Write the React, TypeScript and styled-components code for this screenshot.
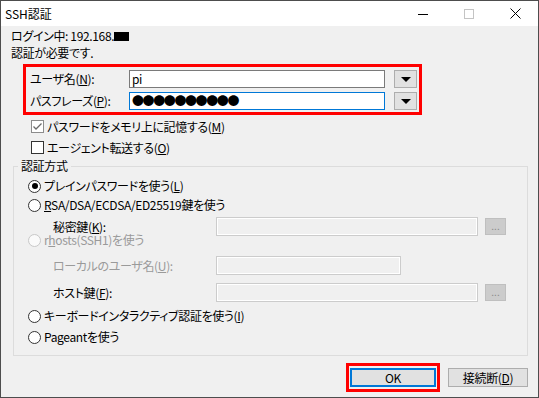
import React from "react";
import styled, { createGlobalStyle } from "styled-components";

const Global = createGlobalStyle`
  html, body { margin: 0; padding: 0; background: #f0f0f0; }
  body {
    font-family: "Noto Sans CJK JP", "Noto Sans", sans-serif;
    font-size: 12px;
    color: #000;
    font-feature-settings: "palt";
    text-autospace: no-autospace;
    text-spacing-trim: space-all;
    letter-spacing: -0.35px;
  }
  * { box-sizing: border-box; }
`;

const Win = styled.div`
  width: 539px;
  height: 398px;
  border: 1px solid #4d4d4d;
  background: #f0f0f0;
  display: flex;
  flex-direction: column;
  overflow: hidden;
`;

const TitleBar = styled.div`
  height: 25px;
  flex: none;
  background: #fff;
  display: flex;
  align-items: center;
`;

const Title = styled.div`
  flex: 1;
  padding-left: 4px;
  font-size: 12px;
  line-height: 25px;
  letter-spacing: 0;
`;

const Caption = styled.div`
  width: 46px;
  height: 25px;
  display: flex;
  align-items: center;
  justify-content: center;
`;

const Body = styled.div`
  flex: 1;
  display: flex;
  flex-direction: column;
  padding: 0 10px;
`;

const Line = styled.div<{ $mt: number }>`
  margin-top: ${(p) => p.$mt}px;
  height: 14px;
  line-height: 14px;
  white-space: nowrap;
`;

const Masked = styled.span`
  display: inline-block;
  width: 15px;
  height: 9px;
  background: #000;
`;

const Highlight = styled.div`
  margin: 4px 0 0 12px;
  width: 399px;
  border: 3px solid #ff0000;
  padding: 3px 2px 2px 4px;
  display: flex;
  flex-direction: column;
  gap: 4px;
`;

const FieldRow = styled.div`
  height: 18px;
  display: flex;
  align-items: center;
`;

const FieldLabel = styled.div`
  width: 99px;
  white-space: nowrap;
  line-height: 14px;
`;

const TextBox = styled.div<{ $focused?: boolean }>`
  width: 256px;
  height: 18px;
  background: #fff;
  border: 1px solid ${(p) => (p.$focused ? "#0078d7" : "#7a7a7a")};
  padding-left: 2px;
  display: flex;
  align-items: center;
  line-height: 14px;
  white-space: nowrap;
  overflow: hidden;
`;

const Dots = styled.span`
  font-size: 12px;
  letter-spacing: -1.4px;
  font-feature-settings: normal;
`;

const DropButton = styled.div`
  margin-left: 9px;
  width: 23px;
  height: 18px;
  background: #e1e1e1;
  border: 1px solid #adadad;
  display: flex;
  align-items: center;
  justify-content: center;
`;

const CheckRow = styled.div<{ $mt: number }>`
  margin: ${(p) => p.$mt}px 0 0 20px;
  height: 13px;
  display: flex;
  align-items: center;
  gap: 3px;
  white-space: nowrap;
  line-height: 14px;
`;

const Box = styled.span<{ $checked?: boolean }>`
  width: 13px;
  height: 13px;
  flex: none;
  background: #fff;
  border: 1px solid ${(p) => (p.$checked ? "#8c8c8c" : "#333")};
  display: flex;
  align-items: center;
  justify-content: center;
`;

const Group = styled.fieldset`
  margin: 5px 0 0 2px;
  width: 515px;
  height: 197px;
  border: 1px solid #dcdcdc;
  padding: 0;
  min-width: 0;
  display: flex;
  flex-direction: column;
`;

const Legend = styled.legend`
  margin-left: 4px;
  padding: 0 3px;
  line-height: 14px;
  font-size: 12px;
`;

const Option = styled.div<{ $mt: number; $disabled?: boolean }>`
  margin: ${(p) => p.$mt}px 0 0 14px;
  height: 14px;
  display: flex;
  align-items: center;
  gap: 3px;
  white-space: nowrap;
  line-height: 14px;
  color: ${(p) => (p.$disabled ? "#9a9a9a" : "#000")};
`;

const Radio = styled.span<{ $selected?: boolean; $disabled?: boolean }>`
  width: 13px;
  height: 13px;
  flex: none;
  border-radius: 50%;
  background: ${(p) => (p.$disabled ? "#fafafa" : "#fff")};
  border: 1px solid ${(p) => (p.$disabled ? "#c8c8c8" : "#333")};
  display: flex;
  align-items: center;
  justify-content: center;
  &::after {
    content: "";
    display: ${(p) => (p.$selected ? "block" : "none")};
    width: 6px;
    height: 6px;
    border-radius: 50%;
    background: #000;
  }
`;

const KeyRow = styled.div<{ $mt: number }>`
  margin: ${(p) => p.$mt}px 0 0 39px;
  height: 19px;
  display: flex;
  align-items: center;
`;

const KeyLabel = styled.div<{ $disabled?: boolean }>`
  width: 163px;
  white-space: nowrap;
  line-height: 12px;
  color: ${(p) => (p.$disabled ? "#9a9a9a" : "#000")};
`;

const DisabledBox = styled.div<{ $w: number }>`
  width: ${(p) => p.$w}px;
  height: 19px;
  background: #f0f0f0;
  border: 1px solid #cccccc;
  box-shadow: inset 1px 1px 0 #fff, inset -1px -1px 0 #fff;
`;

const BrowseButton = styled.div`
  margin-left: 7px;
  width: 21px;
  height: 17px;
  background: #cccccc;
  border: 1px solid #bfbfbf;
  color: #8a8a8a;
  font-size: 10px;
  line-height: 13px;
  letter-spacing: 0;
  text-align: center;
`;

const ButtonBar = styled.div`
  margin-top: 7px;
  display: flex;
  justify-content: flex-end;
  align-items: center;
  gap: 8px;
`;

const OkHighlight = styled.div`
  border: 3px solid #ff0000;
  padding: 2px 1px;
  display: flex;
`;

const Button = styled.div<{ $w: number; $default?: boolean }>`
  width: ${(p) => p.$w}px;
  height: 19px;
  background: #e1e1e1;
  border: ${(p) => (p.$default ? "2px solid #0078d7" : "1px solid #adadad")};
  display: flex;
  align-items: center;
  justify-content: center;
  line-height: 14px;
  white-space: nowrap;
`;

const Triangle = () => (
  <svg width="10" height="5" viewBox="0 0 10 5">
    <polygon points="0,0 10,0 5,5" fill="#000" />
  </svg>
);

const Check = () => (
  <svg width="11" height="11" viewBox="0 0 11 11">
    <polyline points="1.5,5.5 4,8 9.5,2.5" fill="none" stroke="#6a6a6a" strokeWidth="1.3" />
  </svg>
);

export default function App() {
  return (
    <>
      <Global />
      <Win>
        <TitleBar>
          <Title>SSH認証</Title>
          <Caption>
            <svg width="10" height="10" viewBox="0 0 10 10">
              <line x1="0" y1="5.5" x2="10" y2="5.5" stroke="#000" strokeWidth="1" />
            </svg>
          </Caption>
          <Caption>
            <svg width="10" height="10" viewBox="0 0 10 10">
              <rect x="0.5" y="0.5" width="9" height="9" fill="none" stroke="#c4c4c4" strokeWidth="1" />
            </svg>
          </Caption>
          <Caption>
            <svg width="11" height="11" viewBox="0 0 11 11">
              <line x1="0.5" y1="0.5" x2="10.5" y2="10.5" stroke="#000" strokeWidth="1" />
              <line x1="10.5" y1="0.5" x2="0.5" y2="10.5" stroke="#000" strokeWidth="1" />
            </svg>
          </Caption>
        </TitleBar>
        <Body>
          <Line $mt={3}>
            ログイン中: 192.168.<Masked />
          </Line>
          <Line $mt={3}>認証が必要です.</Line>
          <Highlight>
            <FieldRow>
              <FieldLabel>
                ユーザ名(<u>N</u>):
              </FieldLabel>
              <TextBox>pi</TextBox>
              <DropButton>
                <Triangle />
              </DropButton>
            </FieldRow>
            <FieldRow>
              <FieldLabel>
                パスフレーズ(<u>P</u>):
              </FieldLabel>
              <TextBox $focused>
                <Dots>●●●●●●●●●●</Dots>
              </TextBox>
              <DropButton>
                <Triangle />
              </DropButton>
            </FieldRow>
          </Highlight>
          <CheckRow $mt={5}>
            <Box $checked>
              <Check />
            </Box>
            <span>
              パスワードをメモリ上に記憶する(<u>M</u>)
            </span>
          </CheckRow>
          <CheckRow $mt={8}>
            <Box />
            <span>
              エージェント転送する(<u>O</u>)
            </span>
          </CheckRow>
          <Group>
            <Legend>認証方式</Legend>
            <Option $mt={6}>
              <Radio $selected />
              <span>
                プレインパスワードを使う(<u>L</u>)
              </span>
            </Option>
            <Option $mt={5}>
              <Radio />
              <span>
                <u>R</u>SA/DSA/ECDSA/ED25519鍵を使う
              </span>
            </Option>
            <KeyRow $mt={5}>
              <KeyLabel>
                秘密鍵(<u>K</u>):
              </KeyLabel>
              <DisabledBox $w={262} />
              <BrowseButton>...</BrowseButton>
            </KeyRow>
            <Option $mt={-3} $disabled>
              <Radio $disabled />
              <span>
                r<u>h</u>osts(SSH1)を使う
              </span>
            </Option>
            <KeyRow $mt={9}>
              <KeyLabel $disabled>
                ローカルのユーザ名(<u>U</u>):
              </KeyLabel>
              <DisabledBox $w={185} />
            </KeyRow>
            <KeyRow $mt={8}>
              <KeyLabel>
                ホスト鍵(<u>F</u>):
              </KeyLabel>
              <DisabledBox $w={262} />
              <BrowseButton>...</BrowseButton>
            </KeyRow>
            <Option $mt={7}>
              <Radio />
              <span>
                キーボードインタラクティブ認証を使う(<u>I</u>)
              </span>
            </Option>
            <Option $mt={7}>
              <Radio />
              <span>Pageantを使う</span>
            </Option>
          </Group>
          <ButtonBar>
            <OkHighlight>
              <Button $w={86} $default>
                OK
              </Button>
            </OkHighlight>
            <Button $w={80}>
              <span>
                接続断(<u>D</u>)
              </span>
            </Button>
          </ButtonBar>
        </Body>
      </Win>
    </>
  );
}
